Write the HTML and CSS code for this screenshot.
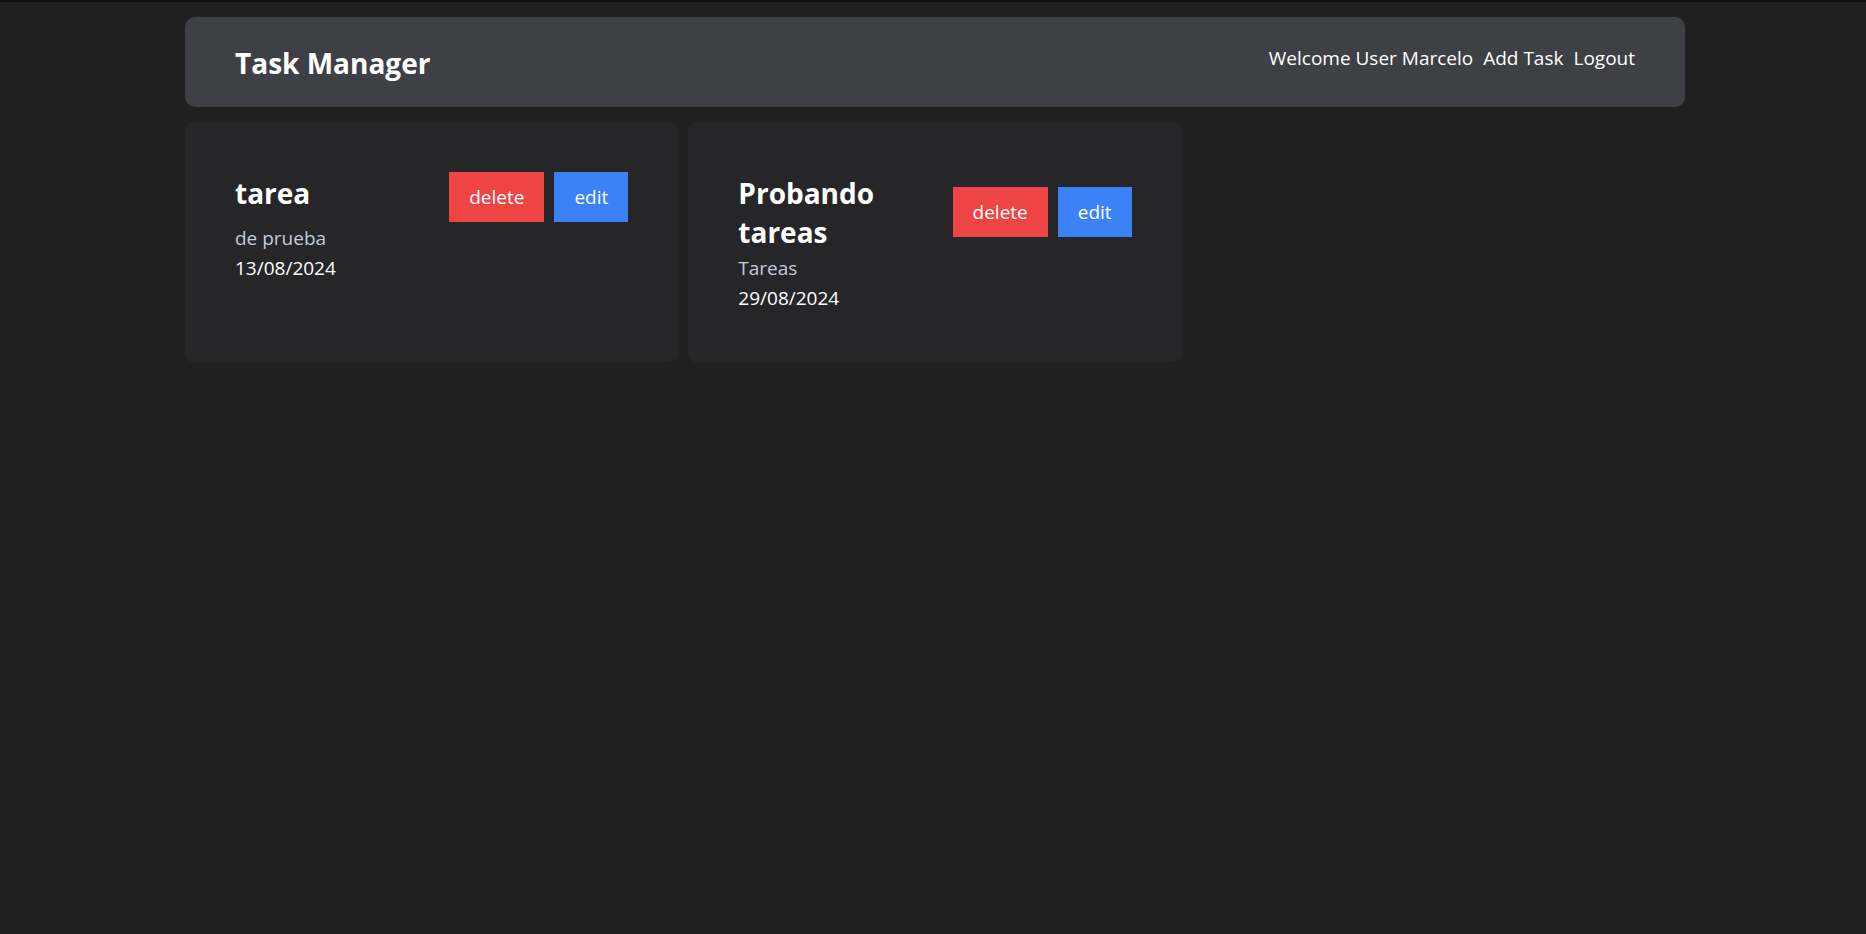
FILE: index.html
```html
<!DOCTYPE html>
<html lang="es">
<head>
<meta charset="utf-8">
<title>Task Manager</title>
<link rel="stylesheet" href="styles.css">
</head>
<body>
<div class="topline"></div>
<div class="page">
  <header class="navbar">
    <h1 class="brand">Task Manager</h1>
    <nav class="nav">
      <span class="nav-item">Welcome User Marcelo</span>
      <a class="nav-item" href="#">Add Task</a>
      <a class="nav-item" href="#">Logout</a>
    </nav>
  </header>
  <main class="grid">
    <div class="card">
      <div class="card-head">
        <h2 class="card-title">tarea</h2>
        <div class="actions">
          <button class="btn btn-delete">delete</button>
          <button class="btn btn-edit">edit</button>
        </div>
      </div>
      <p class="card-desc">de prueba</p>
      <p class="card-date">13/08/2024</p>
    </div>
    <div class="card">
      <div class="card-head">
        <h2 class="card-title">Probando tareas</h2>
        <div class="actions">
          <button class="btn btn-delete">delete</button>
          <button class="btn btn-edit">edit</button>
        </div>
      </div>
      <p class="card-desc">Tareas</p>
      <p class="card-date">29/08/2024</p>
    </div>
  </main>
</div>
</body>
</html>
```

FILE: styles.css
```css
* { box-sizing: border-box; }
html, body {
  margin: 0;
  padding: 0;
  background: #202020;
  color: #ffffff;
  font-family: "Open Sans", "Noto Sans", sans-serif;
  height: 100%;
}
.topline {
  height: 2px;
  background: #111113;
}
.page {
  width: 1500px;
  margin-left: 185px;
  padding-top: 15px;
}
.navbar {
  display: flex;
  justify-content: space-between;
  align-items: flex-start;
  background: #3f4046;
  border-radius: 10px;
  padding: 25px 50px 24px;
  margin-bottom: 15px;
}
.brand {
  margin: 0;
  padding-top: 1px;
  font-size: 28px;
  line-height: 40px;
  font-weight: 700;
}
.nav {
  display: flex;
  gap: 10px;
  font-size: 19px;
  line-height: 30px;
  padding-top: 1px;
}
.nav-item {
  color: #ffffff;
  text-decoration: none;
}
.grid {
  display: grid;
  grid-template-columns: repeat(3, 1fr);
  gap: 10px;
}
.card {
  background: #262629;
  border-radius: 8px;
  padding: 50px;
  min-height: 240px;
}
.card-head {
  display: flex;
  justify-content: space-between;
  align-items: center;
  gap: 20px;
}
.card-title {
  align-self: flex-start;
  margin: 0;
  padding-top: 2px;
  font-size: 28px;
  line-height: 39px;
  font-weight: 700;
  max-width: 160px;
}
.actions {
  display: flex;
  gap: 10px;
  flex-shrink: 0;
}
.btn {
  border: none;
  border-radius: 0;
  color: #ffffff;
  font-family: inherit;
  font-size: 19px;
  line-height: 30px;
  padding: 10px 20px;
  height: 50px;
  cursor: pointer;
}
.btn-delete { background: #ef4444; }
.btn-edit { background: #3b82f6; }
.card-desc, .card-date {
  margin: 0;
  font-size: 19px;
  line-height: 30px;
  position: relative;
  top: 1px;
}
.card-desc { color: #c3cad8; }
.card-date { color: #ffffff; }
```
